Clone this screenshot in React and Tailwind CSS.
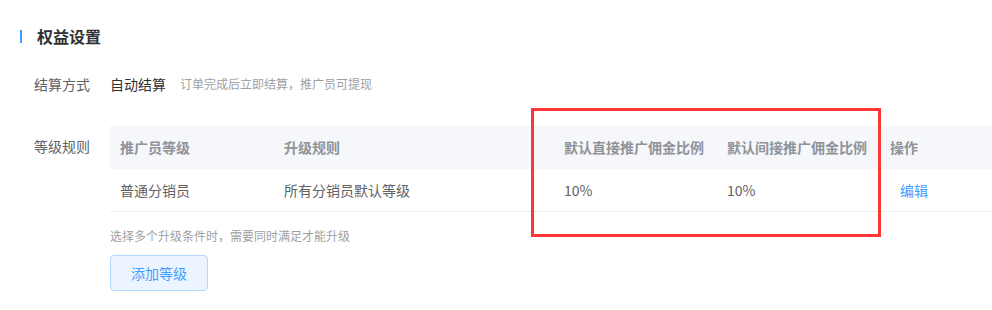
import React from "react";

const font = { fontFamily: '"Noto Sans CJK SC", "Noto Sans", sans-serif' };

export default function App() {
  return (
    <div
      className="relative w-[992px] h-[310px] overflow-hidden bg-white font-['Noto_Sans_CJK_SC',sans-serif]"
      style={font}
    >
      {/* Title */}
      <div className="flex items-center pl-[20px] pt-[27px] h-[45px]">
        <div className="w-[2px] h-[13px] bg-[#409eff]" />
        <div className="ml-[15px] text-[16px] leading-[18px] font-bold text-[#303133]">权益设置</div>
      </div>

      {/* Settlement */}
      <div className="flex items-center pl-[34px] mt-[29px] h-[20px]">
        <div className="w-[76px] text-[14px] text-[#606266]">结算方式</div>
        <div className="text-[14px] text-[#303133]">自动结算</div>
        <div className="ml-[14px] text-[12px] text-[#a0a0a0]">订单完成后立即结算，推广员可提现</div>
      </div>

      {/* Level rules */}
      <div className="flex pl-[34px] mt-[32px]">
        <div className="w-[76px] shrink-0 text-[14px] leading-[40px] text-[#606266]">等级规则</div>
        <div className="flex-1 min-w-0">
          <div className="w-[900px]">
            <div className="flex h-[43px] items-center bg-[#f5f7fa] text-[14px] font-bold text-[#909399]">
              <div className="w-[164px] pl-[10px]">推广员等级</div>
              <div className="w-[280px] pl-[10px]">升级规则</div>
              <div className="w-[163px] pl-[10px]">默认直接推广佣金比例</div>
              <div className="w-[163px] pl-[10px]">默认间接推广佣金比例</div>
              <div className="flex-1 pl-[10px]">操作</div>
            </div>
            <div className="flex h-[43px] items-center border-b border-[#ebeef5] text-[14px] text-[#606266]">
              <div className="w-[164px] pl-[10px]">普通分销员</div>
              <div className="w-[280px] pl-[10px]">所有分销员默认等级</div>
              <div className="w-[163px] pl-[10px]">10%</div>
              <div className="w-[163px] pl-[10px]">10%</div>
              <div className="flex-1 pl-[20px] text-[#409eff]">编辑</div>
            </div>
          </div>
          <div className="mt-[16px] text-[12px] leading-[16px] text-[#a0a0a0]">选择多个升级条件时，需要同时满足才能升级</div>
          <button className="mt-[11px] w-[98px] h-[36px] rounded-[4px] border border-[#b3d8ff] bg-[#ecf5ff] text-[14px] text-[#409eff]">
            添加等级
          </button>
        </div>
      </div>

      {/* Annotation box */}
      <div className="absolute left-[531px] top-[108px] w-[350px] h-[129px] border-[3px] border-[#fe3636]" />
    </div>
  );
}
